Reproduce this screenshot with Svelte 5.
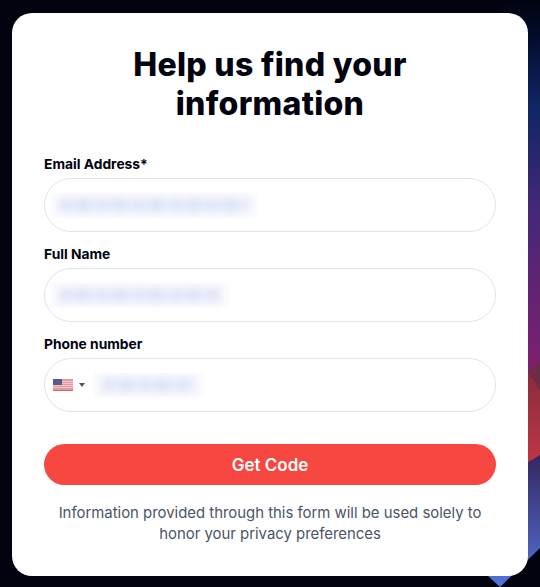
<script>
	const fields = [
		{ label: 'Email Address*', blur: 208 },
		{ label: 'Full Name', blur: 180 }
	];
</script>

<div class="page">
	<svg class="backdrop" viewBox="0 0 540 587" aria-hidden="true">
		<defs>
			<linearGradient id="upper" x1="0" y1="0" x2="0" y2="1">
				<stop offset="0" stop-color="#01030f" />
				<stop offset="0.08" stop-color="#020a26" />
				<stop offset="0.28" stop-color="#0f2566" />
				<stop offset="0.55" stop-color="#44277a" />
				<stop offset="1" stop-color="#821f6c" />
			</linearGradient>
			<linearGradient id="red" x1="0" y1="0" x2="0" y2="1">
				<stop offset="0" stop-color="#85293f" />
				<stop offset="1" stop-color="#cf3b44" />
			</linearGradient>
			<linearGradient id="lower" x1="0" y1="0" x2="0" y2="1">
				<stop offset="0" stop-color="#352660" />
				<stop offset="1" stop-color="#5474dc" />
			</linearGradient>
		</defs>
		<rect x="500" y="0" width="40" height="380" fill="url(#upper)" />
		<polygon points="500,400 528,372 540,362 540,455 500,495" fill="url(#red)" />
		<polygon points="528,372 540,362 540,390" fill="#6e2b45" />
		<polygon points="470,497 540,455 540,548 500,587 488,576" fill="url(#lower)" />
	</svg>

	<div class="card">
		<h1>Help us find your information</h1>

		{#each fields as f}
			<div class="field">
				<div class="label">{f.label}</div>
				<div class="input">
					<div class="smudge" style="width: {f.blur}px"><span></span></div>
				</div>
			</div>
		{/each}

		<div class="field">
			<div class="label">Phone number</div>
			<div class="input phone">
				<svg class="flag" viewBox="0 0 20 12" aria-hidden="true">
					<rect width="20" height="12" fill="#e2989c" />
					<rect y="2" width="20" height="1" fill="#f0c8ca" />
					<rect y="4" width="20" height="1" fill="#f0c8ca" />
					<rect y="6" width="20" height="1" fill="#f0c8ca" />
					<rect y="8" width="20" height="1" fill="#f0c8ca" />
					<rect y="11" width="20" height="1" fill="#c96a70" />
					<rect width="9" height="6" fill="#5a5a90" />
				</svg>
				<span class="caret"></span>
				<div class="smudge short"><span></span></div>
			</div>
		</div>

		<button class="submit" type="button">Get Code</button>
		<p class="note">Information provided through this form will be used solely to honor your privacy preferences</p>
	</div>
</div>

<style>
	:global(body) { margin: 0; background: #01030f; }

	.page {
		position: relative;
		width: 540px;
		height: 587px;
		padding: 13px 12px 11px;
		box-sizing: border-box;
		overflow: hidden;
		font-family: Inter, "Open Sans", sans-serif;
	}
	.backdrop { position: absolute; inset: 0; width: 540px; height: 587px; }

	.card {
		position: relative;
		display: flex;
		flex-direction: column;
		height: 100%;
		box-sizing: border-box;
		padding: 32px 32px 0;
		background: #fff;
		border-radius: 20px;
	}

	h1 {
		margin: 0 auto 31px;
		width: 320px;
		text-align: center;
		font-size: 32px;
		line-height: 39px;
		font-weight: 800;
		letter-spacing: 0.3px;
		color: #01030f;
	}

	.field { display: flex; flex-direction: column; margin-bottom: 12px; }
	.label {
		font-size: 13.8px;
		line-height: 20px;
		font-weight: 700;
		color: #01030f;
		margin-bottom: 4px;
	}
	.input {
		display: flex;
		align-items: center;
		height: 54px;
		box-sizing: border-box;
		padding: 0 5px;
		border: 1px solid #dfe3ef;
		border-radius: 27px;
	}

	/* values are blurred out in the reference */
	.smudge {
		display: flex;
		height: 24px;
		padding: 5px 9px;
		box-sizing: border-box;
		background: #fbfcfe;
	}
	.smudge span {
		flex: 1;
		background: repeating-linear-gradient(90deg, #dfe3f7 0 11px, #e9ecf9 11px 17px, #dce1f6 17px 31px, #eceffa 31px 37px);
		filter: blur(4px);
	}
	.smudge.short { width: 111px; margin-left: 8px; }

	.phone { padding-left: 8px; }
	.flag { width: 20px; height: 12px; }
	.caret {
		width: 0;
		height: 0;
		margin-left: 6px;
		border-left: 3px solid transparent;
		border-right: 3px solid transparent;
		border-top: 4px solid #555;
	}

	.submit {
		height: 41px;
		margin-top: 20px;
		border: 0;
		border-radius: 21px;
		background: #f64740;
		color: #fff;
		font: 600 17px Inter, sans-serif;
	}
	.note {
		margin: 18px 0 0;
		text-align: center;
		font-size: 14.9px;
		line-height: 21px;
		color: #4a5568;
	}
</style>
